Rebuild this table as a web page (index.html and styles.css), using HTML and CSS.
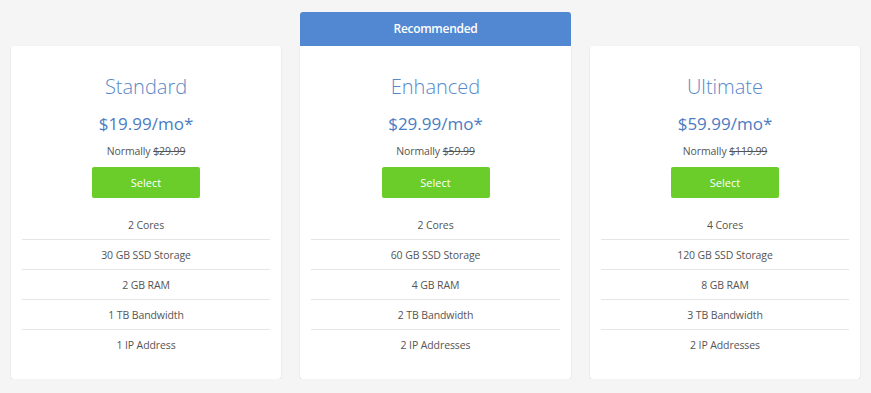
FILE: index.html
```html
<!DOCTYPE html>
<html>
<head>
<meta charset="utf-8">
<link rel="stylesheet" href="styles.css">
</head>
<body>
<div class="plans">
  <div class="plan">
    <div class="plan-head-spacer"></div>
    <div class="card">
      <h2 class="name">Standard</h2>
      <div class="price">$19.99/mo*</div>
      <div class="normal">Normally <s>$29.99</s></div>
      <button class="select">Select</button>
      <ul class="features">
        <li>2 Cores</li>
        <li>30 GB SSD Storage</li>
        <li>2 GB RAM</li>
        <li>1 TB Bandwidth</li>
        <li>1 IP Address</li>
      </ul>
    </div>
  </div>
  <div class="plan plan-rec">
    <div class="ribbon">Recommended</div>
    <div class="card card-rec">
      <h2 class="name">Enhanced</h2>
      <div class="price">$29.99/mo*</div>
      <div class="normal">Normally <s>$59.99</s></div>
      <button class="select">Select</button>
      <ul class="features">
        <li>2 Cores</li>
        <li>60 GB SSD Storage</li>
        <li>4 GB RAM</li>
        <li>2 TB Bandwidth</li>
        <li>2 IP Addresses</li>
      </ul>
    </div>
  </div>
  <div class="plan">
    <div class="plan-head-spacer"></div>
    <div class="card">
      <h2 class="name">Ultimate</h2>
      <div class="price">$59.99/mo*</div>
      <div class="normal">Normally <s>$119.99</s></div>
      <button class="select">Select</button>
      <ul class="features">
        <li>4 Cores</li>
        <li>120 GB SSD Storage</li>
        <li>8 GB RAM</li>
        <li>3 TB Bandwidth</li>
        <li>2 IP Addresses</li>
      </ul>
    </div>
  </div>
</div>
</body>
</html>
```
FILE: styles.css
```css
html, body {
  margin: 0;
  padding: 0;
  background: #f5f5f5;
  font-family: "Open Sans", "Liberation Sans", sans-serif;
}
.plans {
  display: grid;
  grid-template-columns: 270px 271px 270px;
  column-gap: 19px;
  padding: 12px 0 0 11px;
}
.plan {
  display: flex;
  flex-direction: column;
}
.plan-head-spacer {
  height: 34px;
}
.ribbon {
  height: 34px;
  line-height: 33px;
  background: #5288d2;
  color: #fff;
  font-size: 12px;
  font-weight: 600;
  text-align: center;
  border-radius: 3px 3px 0 0;
  letter-spacing: -0.3px;
}
.card {
  background: #fff;
  border-radius: 3px;
  box-shadow: 0 1px 2px rgba(0,0,0,0.12);
  height: 333px;
  box-sizing: border-box;
  padding: 27px 11px 0;
  display: flex;
  flex-direction: column;
  align-items: center;
}
.card-rec {
  border-radius: 0 0 3px 3px;
}
.name {
  margin: 0;
  font-size: 20px;
  font-weight: 300;
  color: #5888c8;
  line-height: 28px;
}
.price {
  margin-top: 11px;
  font-size: 17px;
  font-weight: 400;
  color: #4a7cc3;
  line-height: 24px;
}
.normal {
  margin-top: 7px;
  font-size: 10.5px;
  color: #555;
  line-height: 16px;
  letter-spacing: -0.1px;
}
.normal s {
  color: #555;
}
.select {
  margin-top: 8px;
  width: 108px;
  height: 31px;
  border: none;
  border-radius: 2px;
  background: #6acd2a;
  color: #fff;
  font-family: inherit;
  font-size: 11px;
  padding: 0;
}
.features {
  list-style: none;
  margin: 12px 0 0;
  padding: 0;
  width: 100%;
}
.features li {
  height: 30px;
  box-sizing: border-box;
  line-height: 30px;
  text-align: center;
  font-size: 10.5px;
  color: #555;
  border-bottom: 1px solid #e6e6e6;
  letter-spacing: -0.1px;
}
.features li:last-child {
  border-bottom: none;
}
```
